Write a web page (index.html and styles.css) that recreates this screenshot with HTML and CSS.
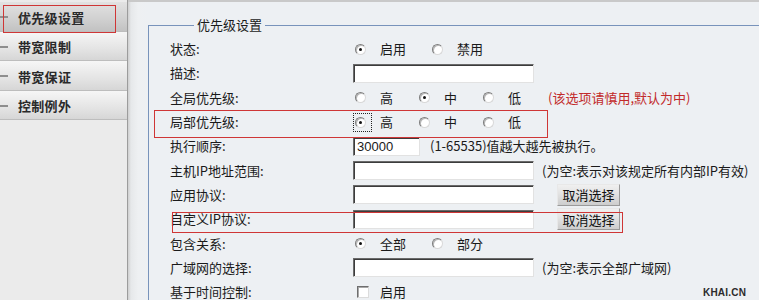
FILE: index.html
```html
<!DOCTYPE html>
<html lang="zh-CN">
<head>
<meta charset="utf-8">
<title>优先级设置</title>
<link rel="stylesheet" href="styles.css">
</head>
<body>
<div class="page">
  <nav class="sidebar">
    <div class="nav-item active"><span class="dash"></span>优先级设置</div>
    <div class="nav-item"><span class="dash"></span>带宽限制</div>
    <div class="nav-item"><span class="dash"></span>带宽保证</div>
    <div class="nav-item"><span class="dash"></span>控制例外</div>
  </nav>
  <div class="main-wrap">
    <div class="gutter"></div>
    <main class="content">
      <fieldset class="panel">
        <legend>优先级设置</legend>
        <div class="form">
          <div class="row">
            <div class="label">状态:</div>
            <div class="value">
              <span class="opt"><span class="radio checked"></span><span>启用</span></span>
              <span class="opt"><span class="radio"></span><span>禁用</span></span>
            </div>
          </div>
          <div class="row">
            <div class="label">描述:</div>
            <div class="value"><span class="input"></span></div>
          </div>
          <div class="row">
            <div class="label">全局优先级:</div>
            <div class="value">
              <span class="opt"><span class="radio"></span><span>高</span></span>
              <span class="opt"><span class="radio checked"></span><span>中</span></span>
              <span class="opt"><span class="radio"></span><span>低</span></span>
              <span class="warn">(该选项请慎用,默认为中)</span>
            </div>
          </div>
          <div class="row">
            <div class="label">局部优先级:</div>
            <div class="value">
              <span class="opt"><span class="focus-ring"><span class="radio checked"></span></span><span>高</span></span>
              <span class="opt"><span class="radio"></span><span>中</span></span>
              <span class="opt"><span class="radio"></span><span>低</span></span>
            </div>
          </div>
          <div class="row">
            <div class="label">执行顺序:</div>
            <div class="value">
              <span class="input short">30000</span>
              <span class="note note-order">(1-65535)值越大越先被执行。</span>
            </div>
          </div>
          <div class="row">
            <div class="label">主机IP地址范围:</div>
            <div class="value">
              <span class="input"></span>
              <span class="note">(为空:表示对该规定所有内部IP有效)</span>
            </div>
          </div>
          <div class="row">
            <div class="label">应用协议:</div>
            <div class="value">
              <span class="input"></span>
              <button class="btn" type="button">取消选择</button>
            </div>
          </div>
          <div class="row">
            <div class="label">自定义IP协议:</div>
            <div class="value">
              <span class="input"></span>
              <button class="btn" type="button">取消选择</button>
            </div>
          </div>
          <div class="row">
            <div class="label">包含关系:</div>
            <div class="value">
              <span class="opt"><span class="radio checked"></span><span>全部</span></span>
              <span class="opt"><span class="radio"></span><span>部分</span></span>
            </div>
          </div>
          <div class="row">
            <div class="label">广域网的选择:</div>
            <div class="value">
              <span class="input"></span>
              <span class="note">(为空:表示全部广域网)</span>
            </div>
          </div>
          <div class="row">
            <div class="label">基于时间控制:</div>
            <div class="value">
              <span class="opt"><span class="checkbox"></span><span>启用</span></span>
            </div>
          </div>
        </div>
      </fieldset>
    </main>
  </div>
  <div class="mark mark-nav"></div>
  <div class="mark mark-local"></div>
  <div class="mark mark-custom"></div>
  <div class="watermark">KHAI.CN</div>
</div>
</body>
</html>
```

FILE: styles.css
```css
html, body {
  margin: 0;
  padding: 0;
}
body {
  font-family: "Noto Sans CJK SC", "Noto Sans", sans-serif;
  font-size: 13px;
  color: #1a1a1a;
  background: #edf0f3;
}
.page {
  position: relative;
  display: flex;
  width: 759px;
  height: 300px;
  overflow: hidden;
}

/* sidebar */
.sidebar {
  flex: 0 0 127px;
  background: #ebebeb;
  border-right: 1px solid #9c9c9c;
  padding-top: 2px;
  box-sizing: content-box;
}
.nav-item {
  display: flex;
  align-items: center;
  padding-top: 2px;
  box-sizing: border-box;
  height: 29.5px;
  border-bottom: 1px solid #bdbdbd;
  background: linear-gradient(#f6f6f6, #e4e4e4 60%, #d6d6d6);
  font-weight: bold;
  color: #2a2a2a;
  font-size: 13px;
  letter-spacing: 0.3px;
}
.nav-item.active {
  background: linear-gradient(#e2e2e2, #d0d0d0 60%, #c2c2c2);
}
.dash {
  width: 8px;
  height: 2px;
  background: #8e8e8e;
  margin-right: 10px;
}

/* main */
.main-wrap {
  flex: 1;
  display: flex;
  border-top: 2px solid #c9c9c9;
  min-width: 0;
}
.gutter {
  flex: 0 0 20px;
  background: linear-gradient(to right, #cfcfcf, #e6e8ea 15%, #eef0f2 50%, #edf0f3);
}
.content {
  flex: 1;
  background: #edf0f3;
  padding-top: 14px;
  min-width: 0;
}
.panel {
  margin: 0;
  padding: 0 0 0 21px;
  border: 1px solid #7893bb;
  border-right: none;
  border-bottom: none;
  width: 700px;
  min-width: 0;
}
.panel legend {
  padding: 0 3px;
  margin-left: 24px;
  line-height: 18px;
  color: #1a1a1a;
}
.form {
  padding-top: 3px;
}
.row {
  display: flex;
  align-items: center;
  height: 24.3px;
  line-height: 16px;
}
.label {
  flex: 0 0 183px;
  white-space: nowrap;
}
.value {
  display: flex;
  align-items: center;
  white-space: nowrap;
}

/* radios */
.opt {
  display: inline-flex;
  align-items: center;
  margin-right: 24px;
}
.radio {
  position: relative;
  width: 11px;
  height: 11px;
  box-sizing: border-box;
  margin-left: 2px;
  margin-right: 14px;
  border-radius: 50%;
  background: #fff;
  border: 1px solid;
  border-color: #7d7d7d #d8d8d8 #d8d8d8 #7d7d7d;
  box-shadow: inset 1px 1px 0 #b8b8b8;
}
.radio.checked::after {
  content: "";
  position: absolute;
  left: 3px;
  top: 3px;
  width: 3px;
  height: 3px;
  border-radius: 50%;
  background: #111;
}
.focus-ring {
  display: inline-flex;
  padding: 3px 5px 3px 1px;
  border: 1px dotted #222;
  margin-right: 8px;
}
.focus-ring .radio {
  margin: 0;
}
.checkbox {
  width: 12px;
  height: 12px;
  box-sizing: border-box;
  margin-left: 4px;
  margin-right: 11px;
  background: #fff;
  border: 1px solid;
  border-color: #6e6e6e #dcdcdc #dcdcdc #6e6e6e;
  box-shadow: inset 1px 1px 0 #a8a8a8;
}

/* inputs */
.input {
  display: inline-block;
  width: 181px;
  height: 19px;
  box-sizing: border-box;
  background: #fff;
  border: 1px solid;
  border-color: #6a6a6a #e2e2e2 #e2e2e2 #6a6a6a;
  box-shadow: inset 1px 1px 0 #3c3c3c;
  font-family: "Liberation Sans", Arial, sans-serif;
  font-size: 13px;
  line-height: 17px;
  padding-left: 3px;
}
.input.short {
  width: 67px;
}
.note {
  margin-left: 8px;
}
.note-order {
  margin-left: 10px;
}
.warn {
  margin-left: 3px;
  color: #c22a2a;
}
.btn {
  margin-left: 23px;
  width: 63px;
  height: 22px;
  padding: 0;
  font-family: "Noto Sans CJK SC", sans-serif;
  font-size: 13px;
  color: #111;
  background: linear-gradient(#f0f0f0, #e2e2e2 45%, #cdcdcd);
  border: 1px solid;
  border-color: #e8e8e8 #9a9a9a #9a9a9a #e8e8e8;
  border-radius: 0;
}

/* annotation boxes */
.mark {
  position: absolute;
  border: 1px solid #cf3636;
  pointer-events: none;
}
.mark-nav {
  left: 3px;
  top: 5px;
  width: 111px;
  height: 26px;
}
.mark-local {
  left: 154px;
  top: 110px;
  width: 392px;
  height: 26px;
}
.mark-custom {
  left: 172px;
  top: 212px;
  width: 449px;
  height: 19px;
}
.watermark {
  position: absolute;
  left: 703px;
  top: 287px;
  font-family: "Liberation Sans", Arial, sans-serif;
  font-weight: bold;
  font-size: 10px;
  color: #2b2b2b;
  letter-spacing: 0.2px;
}
```
